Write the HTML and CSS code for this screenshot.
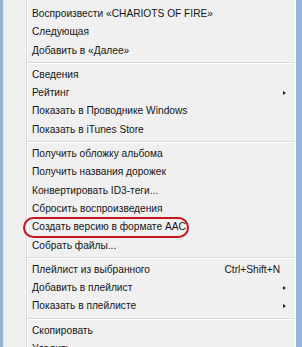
FILE: index.html
```html
<!DOCTYPE html>
<html lang="ru">
<head>
    <meta charset="UTF-8">
    <title>Контекстное меню</title>
    <link rel="stylesheet" href="styles.css">
</head>
<body>

    <div class="menu">
        <div class="item">Воспроизвести «CHARIOTS OF FIRE»</div>
        <div class="item">Следующая</div>
        <div class="item">Добавить в «Далее»</div>
        <div class="sep"></div>
        <div class="item">Сведения</div>
        <div class="item sub">Рейтинг</div>
        <div class="item">Показать в Проводнике Windows</div>
        <div class="item">Показать в iTunes Store</div>
        <div class="sep"></div>
        <div class="item">Получить обложку альбома</div>
        <div class="item">Получить названия дорожек</div>
        <div class="item">Конвертировать ID3-теги...</div>
        <div class="item">Сбросить воспроизведения</div>
        <div class="item marked">Создать версию в формате AAC</div>
        <div class="item">Собрать файлы...</div>
        <div class="sep"></div>
        <div class="item">Плейлист из выбранного <span class="key">Ctrl+Shift+N</span></div>
        <div class="item sub">Добавить в плейлист</div>
        <div class="item sub">Показать в плейлисте</div>
        <div class="sep"></div>
        <div class="item">Скопировать</div>
        <div class="item">Удалить</div>
    </div>

</body>
</html>
```

FILE: styles.css
```css
body {
    margin: 0;
    width: 302px;
    height: 347px;
    overflow: hidden;
    background-color: #94b4d8;
    font-family: "Liberation Sans", Arial, sans-serif;
    font-size: 10.2px;
    color: #151515;
}

.menu {
    margin-left: 3px;
    width: 293px;
    height: 100%;
    box-sizing: border-box;
    padding-top: 5px;
    background-color: #f0f0f0;
    border-left: 1px solid #e4e8ee;
    border-right: 2px solid #fbfbfb;
    /* icon column divider */
    background-image: linear-gradient(to right, transparent 22px, #dcdcdc 22px, #dcdcdc 23px, #ffffff 23px, #ffffff 24px, transparent 24px);
}

.item {
    position: relative;
    height: 18.3px;
    line-height: 18.3px;
    padding-left: 28px;
    white-space: nowrap;
}

.sep {
    height: 6px;
    margin-left: 23px;
    background-image: linear-gradient(to bottom, transparent 2px, #d7d7d7 2px, #d7d7d7 3px, #ffffff 3px, #ffffff 4px, transparent 4px);
}

.key {
    position: absolute;
    right: 14px;
}

.sub::after {
    content: "";
    position: absolute;
    right: 8px;
    top: 7px;
    border-left: 3px solid #222;
    border-top: 2.5px solid transparent;
    border-bottom: 2.5px solid transparent;
}

.marked::before {
    content: "";
    position: absolute;
    left: 19px;
    top: -1px;
    width: 162px;
    height: 17px;
    border: 2.5px solid #c8141e;
    border-radius: 11px;
}
```
